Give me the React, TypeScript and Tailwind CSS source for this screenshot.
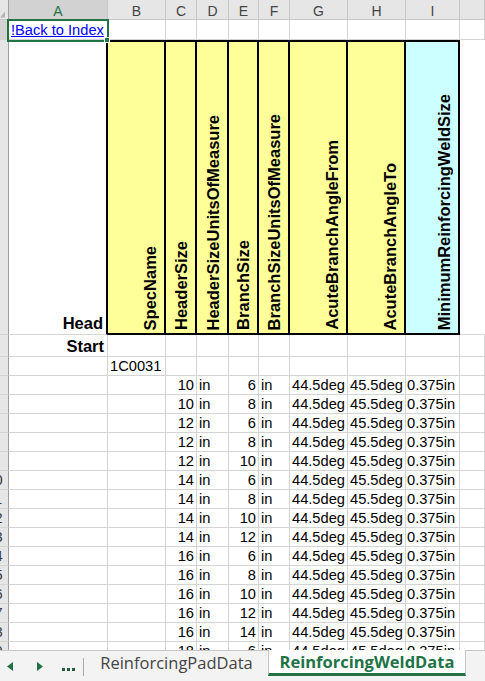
import React from "react";

const GRID =
  "grid grid-cols-[9px_99px_58px_31px_32px_30px_31px_58px_58px_54px_1fr]";
const CELL =
  "border-r border-b border-[#d4d4d4] flex items-end text-[14.67px] leading-[17px] text-black whitespace-nowrap overflow-hidden";

function RowHead({ n, sel }: { n: number; sel?: boolean }) {
  return (
    <div
      className={`border-r border-r-[#9e9e9e] border-b border-b-[#d4d4d4] overflow-hidden flex justify-end items-end ${
        sel ? "bg-[#d2d2d2]" : "bg-[#e6e6e6]"
      }`}
    >
      <div className="w-[27px] shrink-0 text-center text-[14.67px] leading-[17px] text-[#3a3a3a]">
        {n}
      </div>
    </div>
  );
}

const letters = ["A", "B", "C", "D", "E", "F", "G", "H", "I", ""];

const headers = [
  "SpecName",
  "HeaderSize",
  "HeaderSizeUnitsOfMeasure",
  "BranchSize",
  "BranchSizeUnitsOfMeasure",
  "AcuteBranchAngleFrom",
  "AcuteBranchAngleTo",
  "MinimumReinforcingWeldSize",
];

const data: [number, number][] = [
  [10, 6],
  [10, 8],
  [12, 6],
  [12, 8],
  [12, 10],
  [14, 6],
  [14, 8],
  [14, 10],
  [14, 12],
  [16, 6],
  [16, 8],
  [16, 10],
  [16, 12],
  [16, 14],
  [18, 6],
  [18, 8],
];

function ColHeaderRow() {
  return (
    <div className={`${GRID} h-[20px]`}>
      <div className="bg-[#e6e6e6] border-r border-r-[#9e9e9e] border-b border-b-[#c6c6c6] flex items-end justify-end pr-[3px] pb-[1px]">
        <svg width="6" height="7" viewBox="0 0 6 7">
          <polygon points="6,0 6,7 0,7" fill="#b5b5b5" />
        </svg>
      </div>
      {letters.map((l, i) => (
        <div
          key={i}
          className={`border-r border-b border-[#c6c6c6] flex justify-center pt-[4px] text-[14px] leading-[15px] font-['Liberation_Sans',Arial,sans-serif] ${
            i === 0 ? "bg-[#d2d2d2] text-[#217346]" : "bg-[#e6e6e6] text-[#444]"
          }`}
        >
          {l}
        </div>
      ))}
    </div>
  );
}

function EmptyCells({ count }: { count: number }) {
  return (
    <>
      {Array.from({ length: count }).map((_, i) => (
        <div key={i} className={CELL} />
      ))}
    </>
  );
}

export default function App() {
  return (
    <div className="w-[485px] h-[681px] overflow-hidden bg-white flex flex-col font-['Liberation_Sans',Arial,sans-serif]">
      <div className="relative h-[650px] overflow-hidden">
        <ColHeaderRow />

        {/* Row 1 */}
        <div className={`${GRID} h-[20px]`}>
          <RowHead n={1} sel />
          <div className={`${CELL} pl-[2px]`}>
            <span className="text-[#0000ff] underline">!Back to Index</span>
          </div>
          <EmptyCells count={9} />
        </div>

        {/* Row 2 - header */}
        <div className={`${GRID} h-[295px]`}>
          <RowHead n={2} />
          <div className="border-b border-b-[#d4d4d4] border-r-2 border-r-black flex items-end justify-end pr-[3px] pb-[1px] text-[16.5px] leading-[19px] font-bold">
            Head
          </div>
          {headers.map((h, i) => (
            <div
              key={h}
              className={`border-t-2 border-b-2 border-r-2 border-black flex items-end justify-end pb-[3px] pr-[4px] ${
                i === 7 ? "bg-[#ccffff]" : "bg-[#ffff99]"
              }`}
            >
              <span className="[writing-mode:vertical-rl] rotate-180 whitespace-nowrap text-[16.5px] font-bold leading-[19px]">
                {h}
              </span>
            </div>
          ))}
          <div className="border-b border-[#d4d4d4]" />
        </div>

        {/* Row 3 - Start */}
        <div className={`${GRID} h-[22px]`}>
          <RowHead n={3} />
          <div className={`${CELL} justify-end pr-[3px]`}>
            <span className="text-[16.5px] leading-[19px] font-bold">Start</span>
          </div>
          <EmptyCells count={9} />
        </div>

        {/* Row 4 - spec name */}
        <div className={`${GRID} h-[19px]`}>
          <RowHead n={4} />
          <div className={CELL} />
          <div className={`${CELL} pl-[2px]`}>1C0031</div>
          <EmptyCells count={8} />
        </div>

        {data.map(([h, b], i) => (
          <div key={i} className={`${GRID} h-[19px]`}>
            <RowHead n={5 + i} />
            <div className={CELL} />
            <div className={CELL} />
            <div className={`${CELL} justify-end pr-[2px]`}>{h}</div>
            <div className={`${CELL} pl-[2px]`}>in</div>
            <div className={`${CELL} justify-end pr-[2px]`}>{b}</div>
            <div className={`${CELL} pl-[2px]`}>in</div>
            <div className={`${CELL} pl-[2px]`}>44.5deg</div>
            <div className={`${CELL} pl-[2px]`}>45.5deg</div>
            <div className={`${CELL} pl-[1px]`}>0.375in</div>
            <div className={CELL} />
          </div>
        ))}

        {/* selection overlay on A1 */}
        <div className="absolute left-[7px] top-[19px] w-[102px] h-[23px] border-2 border-[#217346] pointer-events-none" />
        <div className="absolute left-[104px] top-[37px] w-[6px] h-[6px] bg-[#217346] border border-white pointer-events-none" />
      </div>

      {/* Sheet tab bar */}
      <div className="flex h-[31px] bg-[#f3f3f3] font-['Open_Sans',sans-serif]">
        <div className="w-[268px] flex border-t border-[#c8c8c8]">
          <div className="w-[85px] flex items-center pt-[1px]">
            <svg className="ml-[7px]" width="6" height="9" viewBox="0 0 6 9">
              <polygon points="6,0 6,9 0,4.5" fill="#217346" />
            </svg>
            <svg className="ml-[24px]" width="6" height="9" viewBox="0 0 6 9">
              <polygon points="0,0 0,9 6,4.5" fill="#217346" />
            </svg>
            <svg className="ml-[19px] mt-[6px]" width="13" height="3" viewBox="0 0 13 3">
              <rect x="0" y="0" width="3" height="3" fill="#1f5f3c" />
              <rect x="5" y="0" width="3" height="3" fill="#1f5f3c" />
              <rect x="10" y="0" width="3" height="3" fill="#1f5f3c" />
            </svg>
            <div className="ml-[8px] w-px h-[18px] bg-[#a8a8a8]" />
          </div>
          <div className="flex-1 flex items-start justify-center pt-[1px] text-[16.5px] leading-[22px] text-[#444]">
            ReinforcingPadData
          </div>
        </div>
        <div className="w-[198px] h-[26px] bg-white border-x border-[#c8c8c8] border-b-[3px] border-b-[#217346] flex items-center justify-center text-[16.5px] leading-[22px] font-bold text-[#217346]">
          ReinforcingWeldData
        </div>
        <div className="flex-1 border-t border-[#c8c8c8]" />
      </div>
    </div>
  );
}
